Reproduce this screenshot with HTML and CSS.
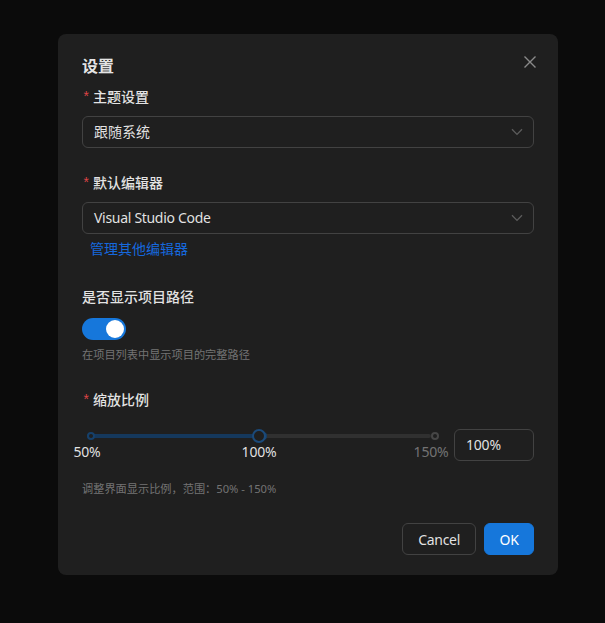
FILE: index.html
```html
<!DOCTYPE html>
<html lang="zh-CN">
<head>
<meta charset="utf-8">
<title>设置</title>
<link rel="stylesheet" href="styles.css">
</head>
<body>
<div class="modal">
  <button class="close" aria-label="Close">
    <svg width="14" height="14" viewBox="0 0 14 14"><path d="M1.5 1.5 L12.5 12.5 M12.5 1.5 L1.5 12.5" stroke="#8a8a8a" stroke-width="1.4" fill="none"/></svg>
  </button>
  <div class="title">设置</div>

  <div class="item">
    <div class="label"><span class="req">*</span>主题设置</div>
    <div class="select"><span class="val">跟随系统</span>
      <svg class="arrow" width="12" height="8" viewBox="0 0 12 8"><path d="M1 1.2 L6 6.4 L11 1.2" stroke="#5c5c5c" stroke-width="1.3" fill="none"/></svg>
    </div>
  </div>

  <div class="item item-link">
    <div class="label"><span class="req">*</span>默认编辑器</div>
    <div class="select"><span class="val latin">Visual Studio Code</span>
      <svg class="arrow" width="12" height="8" viewBox="0 0 12 8"><path d="M1 1.2 L6 6.4 L11 1.2" stroke="#5c5c5c" stroke-width="1.3" fill="none"/></svg>
    </div>
    <a class="link">管理其他编辑器</a>
  </div>

  <div class="item">
    <div class="label">是否显示项目路径</div>
    <div class="switch"><span class="knob"></span></div>
    <div class="help">在项目列表中显示项目的完整路径</div>
  </div>

  <div class="item item-last">
    <div class="label"><span class="req">*</span>缩放比例</div>
    <div class="slider-row">
      <div class="slider">
        <div class="rail">
          <div class="track" style="width:50%"></div>
          <div class="dots"><span class="dot on"></span><span class="dot on"></span><span class="dot"></span></div>
          <div class="handle" style="left:50%"></div>
        </div>
        <div class="marks">
          <span class="mark on"><span>50%</span></span>
          <span class="mark on"><span>100%</span></span>
          <span class="mark"><span>150%</span></span>
        </div>
      </div>
      <div class="num">100%</div>
    </div>
    <div class="help help2">调整界面显示比例，范围：50% - 150%</div>
  </div>

  <div class="footer">
    <button class="btn">Cancel</button>
    <button class="btn primary">OK</button>
  </div>
</div>
</body>
</html>
```
FILE: styles.css
```css
html, body {
  margin: 0;
  padding: 0;
  background: #0b0b0b;
}
body {
  padding: 34px 0 0 58px;
  font-family: "Noto Sans", "Noto Sans CJK SC", sans-serif;
  font-size: 14px;
  color: rgba(255,255,255,0.85);
}
.modal {
  position: relative;
  width: 500px;
  box-sizing: border-box;
  background: #1f1f1f;
  border-radius: 8px;
  padding: 20px 24px 20px 24px;
}
.close {
  position: absolute;
  top: 17px;
  right: 17px;
  width: 22px;
  height: 22px;
  padding: 0;
  border: 0;
  background: transparent;
  display: flex;
  align-items: center;
  justify-content: center;
}
.title {
  font-size: 16px;
  font-weight: 700;
  line-height: 24px;
  margin-bottom: 8px;
  color: rgba(255,255,255,0.9);
}
.item {
  margin-bottom: 24px;
}
.item-link { margin-bottom: 25px; }
.item-last { margin-bottom: 0; }
.label {
  line-height: 22px;
  padding-bottom: 8px;
  font-size: 14px;
  font-weight: 500;
  color: rgba(255,255,255,0.88);
  display: flex;
  align-items: center;
}
.req {
  color: #dc4446;
  font-family: "Liberation Mono", monospace;
  font-weight: 400;
  font-size: 14px;
  margin-right: 4px;
  width: 7px;
  display: inline-block;
  position: relative;
  top: 1px;
}
.select {
  height: 32px;
  box-sizing: border-box;
  border: 1px solid #424242;
  border-radius: 6px;
  display: flex;
  align-items: center;
  justify-content: space-between;
  padding: 0 10px 0 11px;
}
.val {
  line-height: 22px;
  color: rgba(255,255,255,0.88);
}
.latin { letter-spacing: -0.3px; }
.arrow { display: block; }
.link {
  display: block;
  width: max-content;
  margin-top: 3px;
  padding: 0 8px;
  line-height: 24px;
  color: #1668dc;
  font-size: 14px;
}
.switch {
  margin-top: 2px;
  width: 44px;
  height: 22px;
  border-radius: 11px;
  background: #1677db;
  display: flex;
  align-items: center;
  justify-content: flex-end;
  padding: 0 2px;
  box-sizing: border-box;
}
.knob {
  width: 18px;
  height: 18px;
  border-radius: 50%;
  background: #fff;
}
.help {
  margin-top: 5px;
  font-size: 11.2px;
  line-height: 20px;
  color: rgba(255,255,255,0.38);
}
.help2 { margin-top: 16px; }
.slider-row {
  display: flex;
  align-items: flex-start;
  gap: 12px;
}
.slider {
  width: 360px;
  box-sizing: border-box;
  padding: 15px 11px 0 5px;
}
.rail {
  position: relative;
  height: 4px;
  border-radius: 2px;
  background: #303030;
}
.track {
  height: 4px;
  border-radius: 2px;
  background: #15385c;
}
.dots {
  position: absolute;
  left: 0;
  right: -8px;
  top: -2px;
  display: flex;
  justify-content: space-between;
}
.dot {
  width: 4px;
  height: 4px;
  border: 2px solid #464646;
  border-radius: 50%;
  background: #1f1f1f;
}
.dot.on { border-color: #16406a; }
.handle {
  position: absolute;
  top: -5px;
  width: 10px;
  height: 10px;
  margin-left: -7px;
  border: 2px solid #1b4a7a;
  border-radius: 50%;
  background: #1f1f1f;
}
.marks {
  margin-top: 3px;
  display: flex;
  justify-content: space-between;
  height: 22px;
}
.mark {
  width: 0;
  display: flex;
  justify-content: center;
  line-height: 22px;
  color: rgba(255,255,255,0.38);
  white-space: nowrap;
  letter-spacing: -0.2px;
}
.mark.on { color: rgba(255,255,255,0.88); }
.num {
  margin-top: 10px;
  width: 80px;
  height: 32px;
  box-sizing: border-box;
  border: 1px solid #424242;
  border-radius: 6px;
  padding: 0 11px;
  line-height: 30px;
  color: rgba(255,255,255,0.88);
  letter-spacing: -0.2px;
}
.footer {
  margin-top: 24px;
  display: flex;
  justify-content: flex-end;
  gap: 8px;
}
.btn {
  height: 32px;
  padding: 0 15px;
  border-radius: 6px;
  border: 1px solid #424242;
  background: transparent;
  color: rgba(255,255,255,0.88);
  font-family: "Noto Sans", "Noto Sans CJK SC", sans-serif;
  font-size: 14px;
  letter-spacing: -0.3px;
}
.btn.primary {
  width: 50px;
  padding: 0;
  background: #1677db;
  border-color: #1677db;
  color: #fff;
}
```
